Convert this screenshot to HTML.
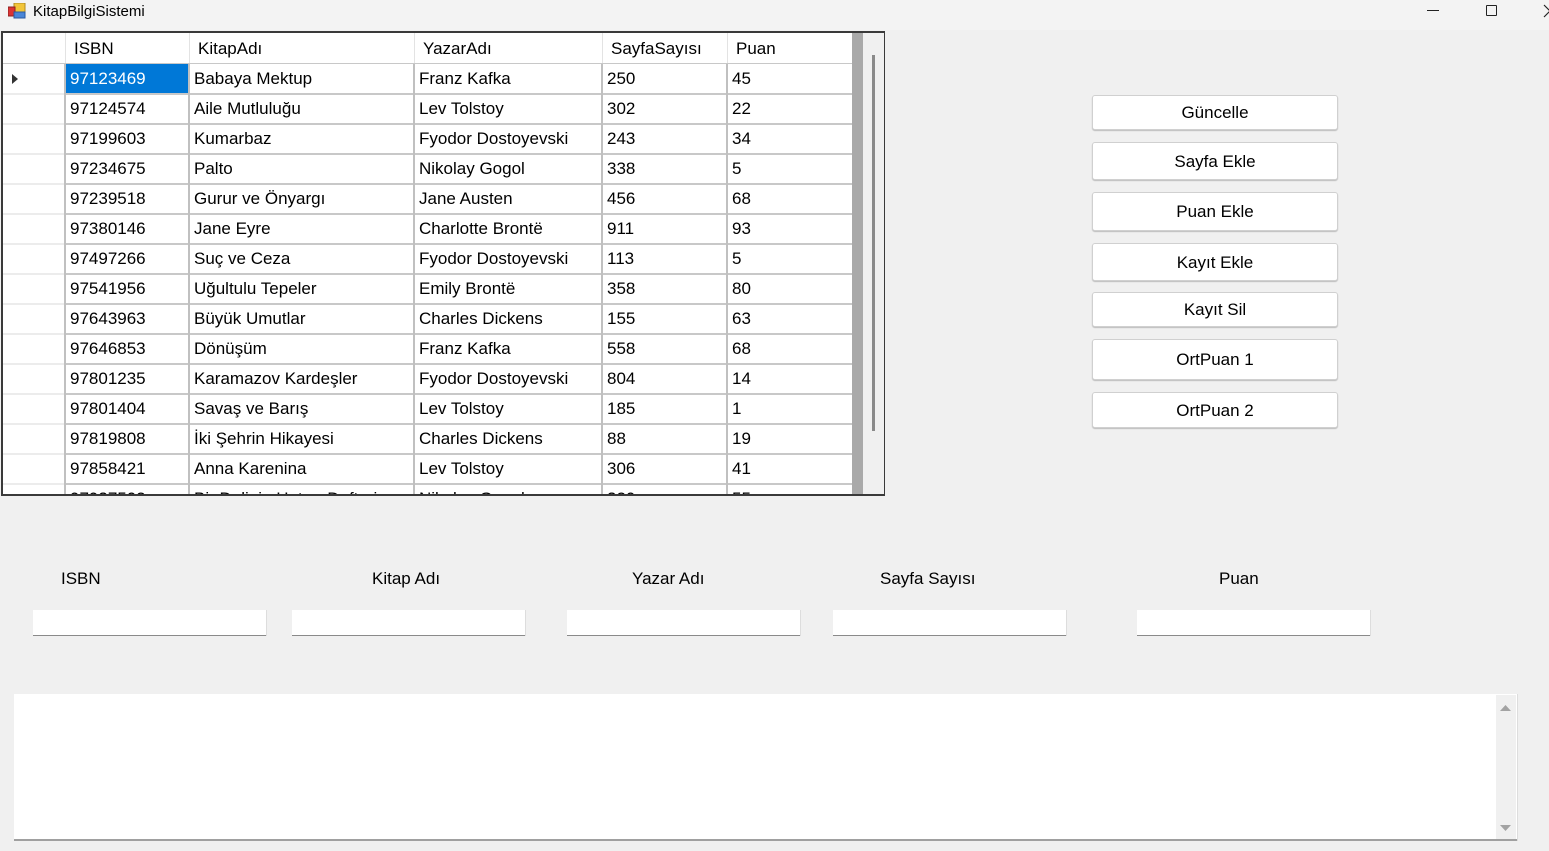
<!DOCTYPE html>
<html><head><meta charset="utf-8"><style>
*{margin:0;padding:0;box-sizing:border-box}
body{width:1549px;height:851px;background:#f0f0f0;font-family:"Liberation Sans",sans-serif;position:relative;overflow:hidden;color:#000}
.a{position:absolute}
.t{font-size:17px;white-space:nowrap;line-height:30px}
.btn{position:absolute;left:1092px;width:246px;background:#fff;border:1px solid #d0d0d0;border-radius:3px;box-shadow:0 1px 1px #bbb;text-align:center;font-size:17px;font-family:"Liberation Sans",sans-serif;padding-top:1px}
.tb{position:absolute;top:610px;height:26px;width:233px;background:#fff;border-bottom:1px solid #8a8a8a;box-shadow:1px 0 0 #ddd}
.lb{position:absolute;top:569px;font-size:17px}
</style></head><body>
<div class="a" style="left:0;top:0;width:1549px;height:30px;background:#f3f3f3"></div>
<svg class="a" style="left:8px;top:3px" width="18" height="16"><rect x="6" y="0" width="11" height="10" fill="#f2c53a" stroke="#b08a20"/><rect x="0" y="4" width="7" height="9" fill="#d33" stroke="#822"/><rect x="6" y="9" width="11" height="6" fill="#4a86d8" stroke="#2a5aa0"/></svg>
<div class="a" style="left:33px;top:3px;font-size:15px">KitapBilgiSistemi</div>
<div class="a" style="left:1427px;top:10px;width:12px;height:1px;background:#222"></div>
<div class="a" style="left:1486px;top:5px;width:11px;height:11px;border:1px solid #222;border-radius:1px"></div>
<svg class="a" style="left:1543px;top:4px" width="8" height="14"><path d="M1 1 L7 7 M7 7 L1 13" stroke="#222" stroke-width="1.2" fill="none"/></svg>

<div class="a" style="left:1px;top:31px;width:884px;height:465px;border:2px solid #3a3a3a;border-right-width:1px;border-bottom-width:2px;background:#fff;overflow:hidden">
<div id="g" class="a" style="left:0;top:0;width:851px;height:462px"></div>
<div class="a" style="left:849px;top:0;width:11px;height:462px;background:#a9a9a9"></div>
<div class="a" style="left:860px;top:0;width:22px;height:462px;background:#f0f0f0"></div>
<div class="a" style="left:869px;top:22px;width:3px;height:376px;background:#8a8a8a"></div>
</div>

<button class="btn" style="top:95px;height:35px">Güncelle</button>
<button class="btn" style="top:142px;height:38px">Sayfa Ekle</button>
<button class="btn" style="top:192px;height:39px">Puan Ekle</button>
<button class="btn" style="top:243px;height:38px">Kayıt Ekle</button>
<button class="btn" style="top:292px;height:35px">Kayıt Sil</button>
<button class="btn" style="top:339px;height:41px">OrtPuan 1</button>
<button class="btn" style="top:392px;height:36px">OrtPuan 2</button>

<div class="lb" style="left:61px">ISBN</div>
<div class="lb" style="left:372px">Kitap Adı</div>
<div class="lb" style="left:632px">Yazar Adı</div>
<div class="lb" style="left:880px">Sayfa Sayısı</div>
<div class="lb" style="left:1219px">Puan</div>
<div class="tb" style="left:33px"></div>
<div class="tb" style="left:292px"></div>
<div class="tb" style="left:567px"></div>
<div class="tb" style="left:833px"></div>
<div class="tb" style="left:1137px"></div>

<div class="a" style="left:14px;top:694px;width:1503px;height:147px;background:#fff;border-bottom:2px solid #a0a0a0;box-shadow:1px 0 0 #ddd"></div>
<div class="a" style="left:1496px;top:695px;width:20px;height:144px;background:#f0f0f0"></div>
<svg class="a" style="left:1499px;top:702px" width="13" height="132"><path d="M1 9 L6.5 3 L12 9Z M1 123 L6.5 129 L12 123Z" fill="#a3a3a3"/></svg>

<script>
var cols=[[0,62],[62,124],[186,225],[411,188],[599,125],[724,125]];
var hd=["ISBN","KitapAdı","YazarAdı","SayfaSayısı","Puan"];
var rows=[["97123469","Babaya Mektup","Franz Kafka","250","45"],["97124574","Aile Mutluluğu","Lev Tolstoy","302","22"],["97199603","Kumarbaz","Fyodor Dostoyevski","243","34"],["97234675","Palto","Nikolay Gogol","338","5"],["97239518","Gurur ve Önyargı","Jane Austen","456","68"],["97380146","Jane Eyre","Charlotte Brontë","911","93"],["97497266","Suç ve Ceza","Fyodor Dostoyevski","113","5"],["97541956","Uğultulu Tepeler","Emily Brontë","358","80"],["97643963","Büyük Umutlar","Charles Dickens","155","63"],["97646853","Dönüşüm","Franz Kafka","558","68"],["97801235","Karamazov Kardeşler","Fyodor Dostoyevski","804","14"],["97801404","Savaş ve Barış","Lev Tolstoy","185","1"],["97819808","İki Şehrin Hikayesi","Charles Dickens","88","19"],["97858421","Anna Karenina","Lev Tolstoy","306","41"],["97937502","Bir Delinin Hatıra Defteri","Nikolay Gogol","320","55"]];
var h="";
for(var c=1;c<6;c++){h+='<div class="a t" style="left:'+(cols[c][0]+9)+'px;top:1px;line-height:30px">'+hd[c-1]+'</div>';}
for(var c=1;c<6;c++){h+='<div class="a" style="left:'+cols[c][0]+'px;top:0;width:1px;height:30px;background:#e3e3e3"></div>';}
h+='<div class="a" style="left:0;top:30px;width:849px;height:1px;background:#c8c8c8"></div>';
for(var r=0;r<rows.length;r++){var y=31+30*r;
 if(r==0)h+='<div class="a" style="left:63px;top:'+y+'px;width:123px;height:29px;background:#0078d7"></div>';
 for(var c=1;c<6;c++){h+='<div class="a t" style="left:'+(cols[c][0]+5)+'px;top:'+y+'px;'+(r==0&&c==1?'color:#fff':'')+'">'+rows[r][c-1]+'</div>';}
 h+='<div class="a" style="left:0;top:'+(y+29)+'px;width:62px;height:2px;background:#ececec"></div>';
 h+='<div class="a" style="left:62px;top:'+(y+29)+'px;width:787px;height:2px;background:#c8c8c8"></div>';
}
h+='<div class="a" style="left:9px;top:41px;width:0;height:0;border-left:6px solid #333;border-top:5px solid transparent;border-bottom:5px solid transparent"></div>';
for(var c=1;c<6;c++){h+='<div class="a" style="left:'+(cols[c][0]-1)+'px;top:31px;width:2px;height:440px;background:#c0c0c0"></div>';}
document.getElementById("g").innerHTML=h;
</script>
</body></html>
